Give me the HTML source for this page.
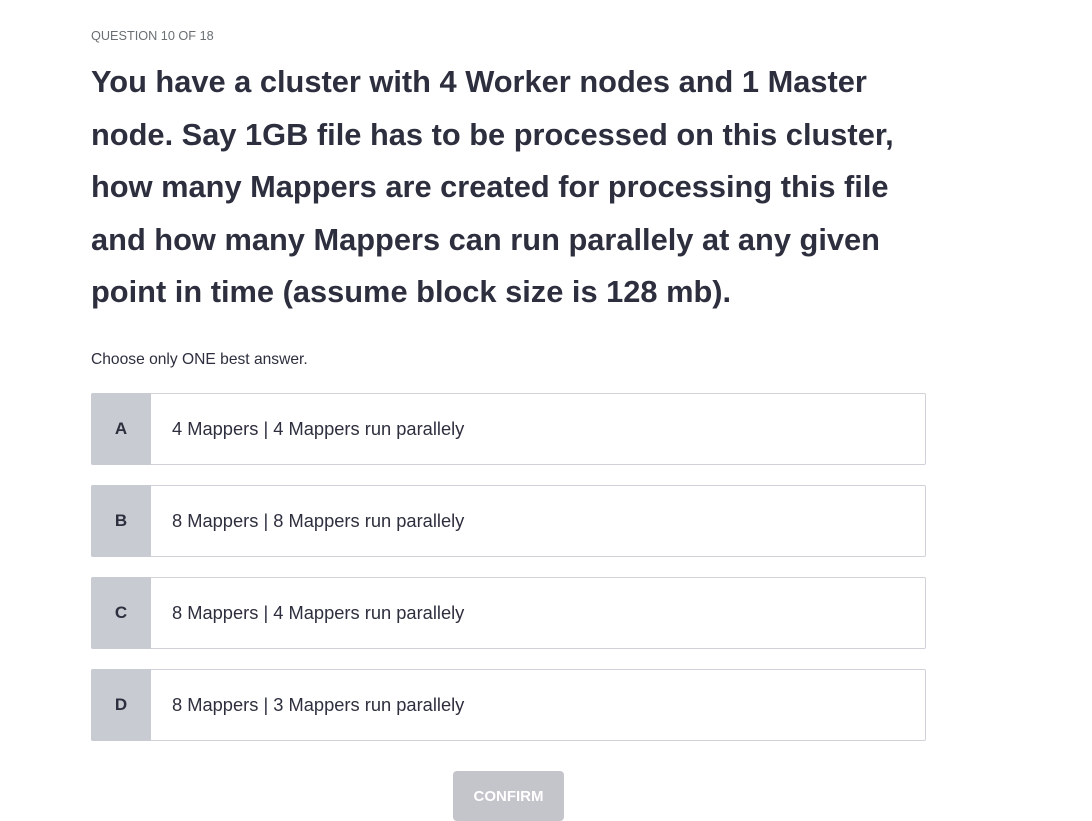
<!DOCTYPE html>
<html><head><style>
body{margin:0;background:#fff;font-family:"Liberation Sans",sans-serif;color:#2d2f3e;width:1092px;height:821px;overflow:hidden;position:relative}
.q{position:absolute;left:91px;top:29px;font-size:12.7px;color:#6a6f73}
h1{position:absolute;left:91px;top:56px;margin:0;font-size:30.8px;line-height:52.5px;font-weight:bold;color:#2d2f3e;white-space:nowrap}
.ch{position:absolute;left:91px;top:351px;font-size:15.6px;color:#2d2f3e}
.opt{position:absolute;left:91px;width:833px;height:70px;border:1px solid #d1d2d9;border-radius:2px;background:#fff;display:flex;align-items:center}
.opt .l{width:60px;height:72px;margin:-1px 0 -1px -1px;background:#c9cbd3;display:flex;align-items:center;justify-content:center;font-weight:bold;font-size:17px;border-radius:2px 0 0 2px}
.opt .t{margin-left:21px;font-size:18.3px}
.btn{position:absolute;left:453px;top:771px;width:111px;height:50px;background:#c4c5cb;border-radius:4px;color:#fff;font-weight:bold;font-size:15px;display:flex;align-items:center;justify-content:center}
</style></head><body>
<div class="q">QUESTION 10 OF 18</div>
<h1>You have a cluster with 4 Worker nodes and 1 Master<br>node. Say 1GB file has to be processed on this cluster,<br>how many Mappers are created for processing this file<br>and how many Mappers can run parallely at any given<br>point in time (assume block size is 128 mb).</h1>
<div class="ch">Choose only ONE best answer.</div>
<div class="opt" style="top:393px"><div class="l">A</div><div class="t">4 Mappers | 4 Mappers run parallely</div></div>
<div class="opt" style="top:485px"><div class="l">B</div><div class="t">8 Mappers | 8 Mappers run parallely</div></div>
<div class="opt" style="top:577px"><div class="l">C</div><div class="t">8 Mappers | 4 Mappers run parallely</div></div>
<div class="opt" style="top:669px"><div class="l">D</div><div class="t">8 Mappers | 3 Mappers run parallely</div></div>
<div class="btn">CONFIRM</div>
</body></html>
